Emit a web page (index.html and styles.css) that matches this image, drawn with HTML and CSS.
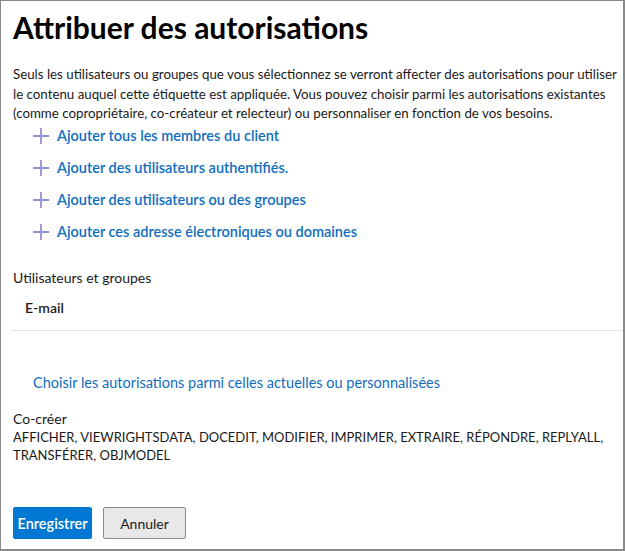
FILE: index.html
```html
<!DOCTYPE html>
<html lang="fr">
<head>
<meta charset="utf-8">
<link rel="stylesheet" href="styles.css">
</head>
<body>
<div class="window">
  <h1 class="title">Attribuer des autorisations</h1>
  <p class="intro">Seuls les utilisateurs ou groupes que vous sélectionnez se verront affecter des autorisations pour utiliser le contenu auquel cette étiquette est appliquée. Vous pouvez choisir parmi les autorisations existantes (comme copropriétaire, co-créateur et relecteur) ou personnaliser en fonction de vos besoins.</p>
  <ul class="actions">
    <li class="action"><span class="plus"></span><span class="action-text">Ajouter tous les membres du client</span></li>
    <li class="action"><span class="plus"></span><span class="action-text">Ajouter des utilisateurs authentifiés.</span></li>
    <li class="action"><span class="plus"></span><span class="action-text">Ajouter des utilisateurs ou des groupes</span></li>
    <li class="action"><span class="plus"></span><span class="action-text">Ajouter ces adresse électroniques ou domaines</span></li>
  </ul>
  <div class="section-label">Utilisateurs et groupes</div>
  <div class="table-head">E-mail</div>
  <a class="choose">Choisir les autorisations parmi celles actuelles ou personnalisées</a>
  <div class="perm-name">Co-créer</div>
  <div class="perm-list">AFFICHER, VIEWRIGHTSDATA, DOCEDIT, MODIFIER, IMPRIMER, EXTRAIRE, RÉPONDRE, REPLYALL, TRANSFÉRER, OBJMODEL</div>
  <div class="buttons">
    <button class="btn btn-primary">Enregistrer</button>
    <button class="btn btn-default">Annuler</button>
  </div>
</div>
</body>
</html>
```
FILE: styles.css
```css
html, body {
  margin: 0;
  padding: 0;
  background: #ffffff;
}
.window {
  width: 625px;
  height: 551px;
  box-sizing: border-box;
  border: 1px solid #8a8a8a;
  border-right-width: 2px;
  border-bottom-width: 2px;
  font-family: "Lato", "Noto Sans", sans-serif;
  color: #1a1a1a;
  display: flex;
  flex-direction: column;
  padding-left: 12px;
  overflow: hidden;
}
.title {
  margin: 10px 0 0 0;
  font-size: 30px;
  line-height: 32px;
  font-weight: 700;
  color: #000;
}
.intro {
  margin: 22px 0 0 0;
  font-size: 13.3px;
  line-height: 19.5px;
  color: #1a1a1a;
}
.actions {
  list-style: none;
  margin: -4px 0 0 0;
  padding: 0 0 0 20px;
}
.action {
  display: flex;
  align-items: center;
  height: 32px;
  gap: 8px;
  color: #106ebe;
  font-size: 14.5px;
  font-weight: 600;
}
.plus {
  width: 16px;
  height: 16px;
  position: relative;
  flex: none;
}
.plus::before, .plus::after {
  content: "";
  position: absolute;
  background: #8d94dc;
}
.plus::before {
  left: 0;
  right: 0;
  top: 7px;
  height: 2px;
}
.plus::after {
  top: 0;
  bottom: 0;
  left: 7px;
  width: 2px;
  background: #a89ad8;
}
.section-label {
  margin-top: 20px;
  font-size: 14px;
  line-height: 20px;
}
.table-head {
  margin: 0 0 0 -2px;
  padding: 10px 0 0 14px;
  box-sizing: border-box;
  height: 43px;
  border-bottom: 1px solid #e1e1e1;
  font-size: 14px;
  line-height: 20px;
  font-weight: 600;
  color: #1a1a1a;
}
.choose {
  margin: 42px 0 0 20px;
  color: #106ebe;
  font-size: 14.5px;
  line-height: 20px;
}
.perm-name {
  margin-top: 17px;
  font-size: 14px;
  line-height: 18px;
}
.perm-list {
  font-size: 13px;
  line-height: 18px;
}
.buttons {
  display: flex;
  gap: 11px;
  margin-top: auto;
  margin-bottom: 10px;
}
.btn {
  height: 32px;
  font-family: inherit;
  font-size: 14px;
  padding: 0;
  border-radius: 2px;
  cursor: pointer;
}
.btn-primary {
  background: #0078d4;
  color: #fff;
  border: 1px solid #0078d4;
  font-weight: 600;
  font-size: 14.5px;
  width: 79px;
}
.btn-default {
  background: #e8e8e8;
  color: #1a1a1a;
  border: 1px solid #8a8a8a;
  width: 83px;
}
```
